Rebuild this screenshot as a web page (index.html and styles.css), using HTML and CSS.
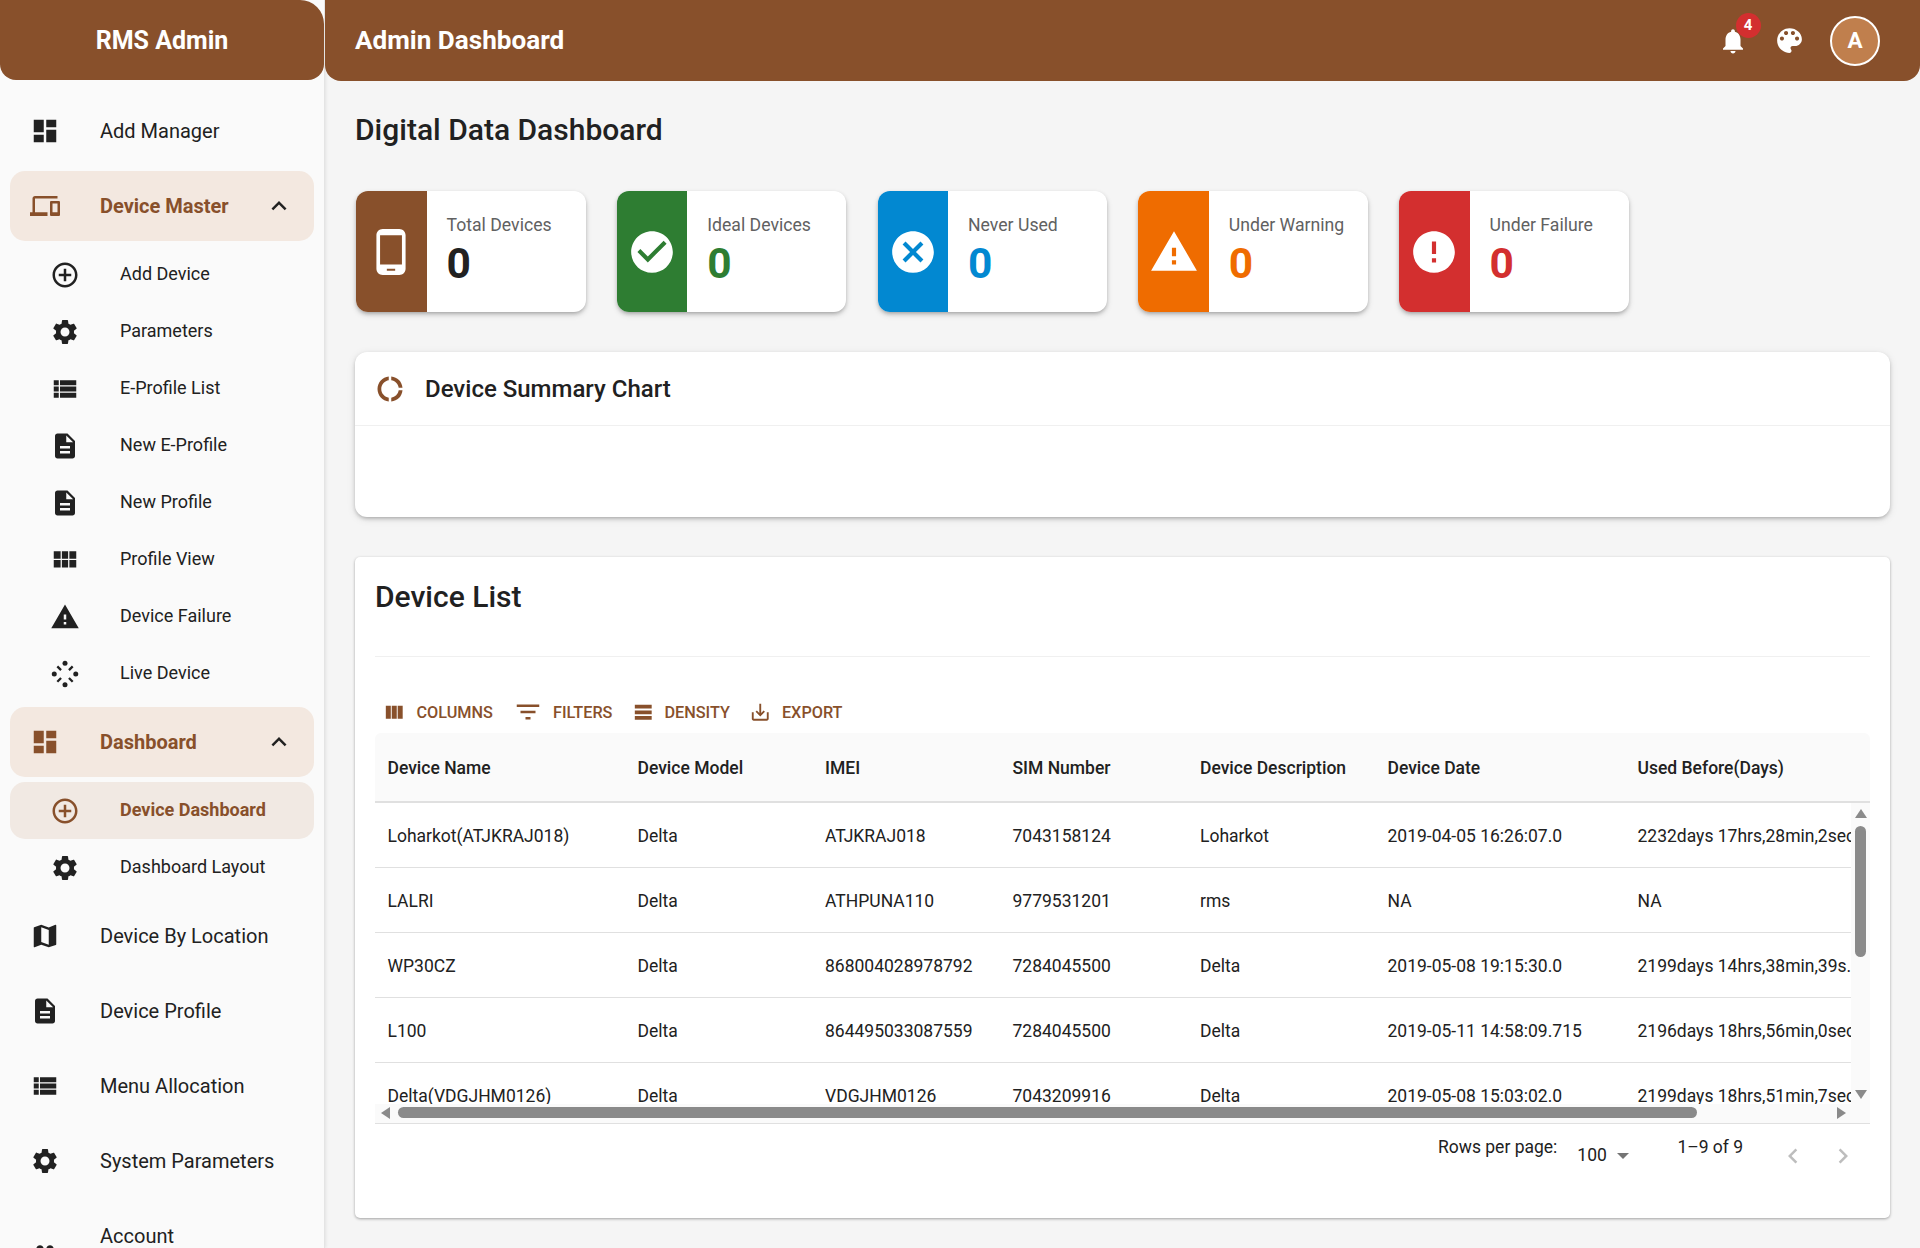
FILE: index.html
```html
<!DOCTYPE html>
<html lang="en">
<head>
  <meta charset="utf-8">
  <title>Admin Dashboard</title>
  <link rel="stylesheet" href="styles.css">
</head>
<body>

<svg class="sprite" xmlns="http://www.w3.org/2000/svg">
  <symbol id="i-dashboard" viewBox="0 0 24 24"><path d="M3 13h8V3H3v10zm0 8h8v-6H3v6zm10 0h8V11h-8v10zm0-18v6h8V3h-8z"/></symbol>
  <symbol id="i-devices" viewBox="0 0 24 24"><path d="M4 6h18V4H4c-1.1 0-2 .9-2 2v11H0v3h14v-3H4V6zm19 2h-6c-.55 0-1 .45-1 1v10c0 .55.45 1 1 1h6c.55 0 1-.45 1-1V9c0-.55-.45-1-1-1zm-1 9h-4v-7h4v7z"/></symbol>
  <symbol id="i-add" viewBox="0 0 24 24"><path d="M13 7h-2v4H7v2h4v4h2v-4h4v-2h-4V7zm-1-5C6.48 2 2 6.48 2 12s4.48 10 10 10 10-4.48 10-10S17.52 2 12 2zm0 18c-4.41 0-8-3.59-8-8s3.59-8 8-8 8 3.59 8 8-3.59 8-8 8z"/></symbol>
  <symbol id="i-settings" viewBox="0 0 24 24"><path d="M19.14 12.94c.04-.3.06-.61.06-.94 0-.32-.02-.64-.07-.94l2.03-1.58c.18-.14.23-.41.12-.61l-1.92-3.32c-.12-.22-.37-.29-.59-.22l-2.39.96c-.5-.38-1.03-.7-1.62-.94l-.36-2.54c-.04-.24-.24-.41-.48-.41h-3.84c-.24 0-.43.17-.47.41l-.36 2.54c-.59.24-1.13.57-1.62.94l-2.39-.96c-.22-.08-.47 0-.59.22L2.74 8.87c-.12.21-.08.47.12.61l2.03 1.58c-.05.3-.09.63-.09.94s.02.64.07.94l-2.03 1.58c-.18.14-.23.41-.12.61l1.92 3.32c.12.22.37.29.59.22l2.39-.96c.5.38 1.03.7 1.62.94l.36 2.54c.05.24.24.41.48.41h3.84c.24 0 .44-.17.47-.41l.36-2.54c.59-.24 1.13-.56 1.62-.94l2.39.96c.22.08.47 0 .59-.22l1.92-3.32c.12-.22.07-.47-.12-.61l-2.01-1.58zM12 15.6c-1.98 0-3.6-1.62-3.6-3.6s1.62-3.6 3.6-3.6 3.6 1.62 3.6 3.6-1.62 3.6-3.6 3.6z"/></symbol>
  <symbol id="i-list" viewBox="0 0 24 24"><path d="M3 14h4v-4H3v4zm0 5h4v-4H3v4zM3 9h4V5H3v4zm5 5h13v-4H8v4zm0 5h13v-4H8v4zM8 5v4h13V5H8z"/></symbol>
  <symbol id="i-doc" viewBox="0 0 24 24"><path d="M14 2H6c-1.1 0-1.99.9-1.99 2L4 20c0 1.1.89 2 1.99 2H18c1.1 0 2-.9 2-2V8l-6-6zm2 16H8v-2h8v2zm0-4H8v-2h8v2zm-3-5V3.5L18.5 9H13z"/></symbol>
  <symbol id="i-module" viewBox="0 0 24 24"><path d="M3 11h5.5V5H3v6zm0 7h5.5v-6H3v6zm6.5 0h5v-6h-5v6zm6 0H21v-6h-5.5v6zm-6-7h5V5h-5v6zm6-6v6H21V5h-5.5z"/></symbol>
  <symbol id="i-warning" viewBox="0 0 24 24"><path d="M1 21h22L12 2 1 21zm12-3h-2v-2h2v2zm0-4h-2v-4h2v4z"/></symbol>
  <symbol id="i-live" viewBox="0 0 24 24">
    <circle cx="12" cy="3.4" r="2"/><circle cx="20.6" cy="12" r="2"/><circle cx="12" cy="20.6" r="2"/><circle cx="3.4" cy="12" r="2"/>
    <path d="M6.5 5.2 9.5 8.2 8.2 9.5 5.2 6.5zM17.5 5.2 18.8 6.5 15.8 9.5 14.5 8.2zM8.2 14.5 9.5 15.8 6.5 18.8 5.2 17.5zM15.8 14.5 18.8 17.5 17.5 18.8 14.5 15.8z"/>
  </symbol>
  <symbol id="i-map" viewBox="0 0 24 24"><path d="M20.5 3l-.16.03L15 5.1 9 3 3.36 4.9c-.21.07-.36.25-.36.48V20.5c0 .28.22.5.5.5l.16-.03L9 18.9l6 2.1 5.64-1.9c.21-.07.36-.25.36-.48V3.5c0-.28-.22-.5-.5-.5zM15 19l-6-2.11V5l6 2.11V19z"/></symbol>
  <symbol id="i-people" viewBox="0 0 24 24"><path d="M16 11c1.66 0 2.99-1.34 2.99-3S17.66 5 16 5c-1.66 0-3 1.34-3 3s1.34 3 3 3zm-8 0c1.66 0 2.99-1.34 2.99-3S9.66 5 8 5C6.34 5 5 6.34 5 8s1.34 3 3 3zm0 2c-2.33 0-7 1.17-7 3.5V19h14v-2.5c0-2.33-4.67-3.5-7-3.5zm8 0c-.29 0-.62.02-.97.05 1.16.84 1.97 1.97 1.97 3.45V19h6v-2.5c0-2.33-4.67-3.5-7-3.5z"/></symbol>
  <symbol id="i-less" viewBox="0 0 24 24"><path d="M12 8l-6 6 1.41 1.41L12 10.83l4.59 4.58L18 14z"/></symbol>
  <symbol id="i-more" viewBox="0 0 24 24"><path d="M16.59 8.59L12 13.17 7.41 8.59 6 10l6 6 6-6z"/></symbol>
  <symbol id="i-bell" viewBox="0 0 24 24"><path d="M12 22c1.1 0 2-.9 2-2h-4c0 1.1.89 2 2 2zm6-6v-5c0-3.07-1.64-5.64-4.5-6.32V4c0-.83-.67-1.5-1.5-1.5s-1.5.67-1.5 1.5v.68C7.63 5.36 6 7.92 6 11v5l-2 2v1h16v-1l-2-2z"/></symbol>
  <symbol id="i-palette" viewBox="0 0 24 24"><path d="M12 3c-4.97 0-9 4.03-9 9s4.03 9 9 9c.83 0 1.5-.67 1.5-1.5 0-.39-.15-.74-.39-1.01-.23-.26-.38-.61-.38-.99 0-.83.67-1.5 1.5-1.5H16c2.76 0 5-2.24 5-5 0-4.42-4.03-8-9-8zm-5.5 9c-.83 0-1.5-.67-1.5-1.5S5.67 9 6.5 9 8 9.67 8 10.5 7.33 12 6.5 12zm3-4C8.67 8 8 7.33 8 6.5S8.67 5 9.5 5s1.5.67 1.5 1.5S10.33 8 9.5 8zm5 0c-.83 0-1.5-.67-1.5-1.5S13.67 5 14.5 5s1.5.67 1.5 1.5S15.33 8 14.5 8zm3 4c-.83 0-1.5-.67-1.5-1.5S16.67 9 17.5 9s1.5.67 1.5 1.5-.67 1.5-1.5 1.5z"/></symbol>
  <symbol id="i-phone" viewBox="0 0 24 24"><path d="M16 1H8C6.34 1 5 2.34 5 4v16c0 1.66 1.34 3 3 3h8c1.66 0 3-1.34 3-3V4c0-1.66-1.34-3-3-3zm-2 20h-4v-1h4v1zm3.25-3H6.75V4h10.5v14z"/></symbol>
  <symbol id="i-check" viewBox="0 0 24 24"><path d="M12 2C6.48 2 2 6.48 2 12s4.48 10 10 10 10-4.48 10-10S17.52 2 12 2zm-2 15l-5-5 1.41-1.41L10 14.17l7.59-7.59L19 8l-9 9z"/></symbol>
  <symbol id="i-cancel" viewBox="0 0 24 24"><path d="M12 2C6.47 2 2 6.47 2 12s4.47 10 10 10 10-4.47 10-10S17.53 2 12 2zm5 13.59L15.59 17 12 13.41 8.41 17 7 15.59 10.59 12 7 8.41 8.41 7 12 10.59 15.59 7 17 8.41 13.41 12 17 15.59z"/></symbol>
  <symbol id="i-error" viewBox="0 0 24 24"><path d="M12 2C6.48 2 2 6.48 2 12s4.48 10 10 10 10-4.48 10-10S17.52 2 12 2zm1 15h-2v-2h2v2zm0-4h-2V7h2v6z"/></symbol>
  <symbol id="i-donut" viewBox="0 0 24 24"><path d="M11 5.08V2c-5 .5-9 4.81-9 10s4 9.5 9 10v-3.08c-3-.48-6-3.19-6-6.92s3-6.44 6-6.92zM18.97 11H22c-.47-5-4-8.53-9-9v3.08C16 5.51 18.54 8 18.97 11zM13 18.92V22c5-.47 8.53-4 9-9h-3.03c-.43 3-2.97 5.49-5.97 5.92z"/></symbol>
  <symbol id="i-columns" viewBox="0 0 24 24"><path d="M14.67 5v14H9.33V5h5.33zm1 14H21V5h-5.33v14zm-7.34 0V5H3v14h5.33z"/></symbol>
  <symbol id="i-filter" viewBox="0 0 24 24"><path d="M10 18h4v-2h-4v2zM3 6v2h18V6H3zm3 7h12v-2H6v2z"/></symbol>
  <symbol id="i-density" viewBox="0 0 24 24"><path d="M21 8H3V4h18v4zm0 2H3v4h18v-4zm0 6H3v4h18v-4z"/></symbol>
  <symbol id="i-export" viewBox="0 0 24 24"><path d="M19 12v7H5v-7H3v7c0 1.1.9 2 2 2h14c1.1 0 2-.9 2-2v-7h-2zm-6 .67l2.59-2.58L17 11.5l-5 5-5-5 1.41-1.41L11 12.67V3h2z"/></symbol>
  <symbol id="i-prev" viewBox="0 0 24 24"><path d="M15.41 7.41L14 6l-6 6 6 6 1.41-1.41L10.83 12z"/></symbol>
  <symbol id="i-next" viewBox="0 0 24 24"><path d="M10 6L8.59 7.41 13.17 12l-4.58 4.59L10 18l6-6z"/></symbol>
</svg>

<div class="app">

  <aside class="sidebar">
    <div class="brand">RMS Admin</div>
    <ul class="menu">
      <li class="item"><svg class="icon"><use href="#i-dashboard"/></svg><span class="label">Add Manager</span></li>

      <li class="item open"><svg class="icon"><use href="#i-devices"/></svg><span class="label">Device Master</span><svg class="chevron"><use href="#i-less"/></svg></li>
      <li class="sub"><svg class="icon"><use href="#i-add"/></svg><span>Add Device</span></li>
      <li class="sub"><svg class="icon"><use href="#i-settings"/></svg><span>Parameters</span></li>
      <li class="sub"><svg class="icon"><use href="#i-list"/></svg><span>E-Profile List</span></li>
      <li class="sub"><svg class="icon"><use href="#i-doc"/></svg><span>New E-Profile</span></li>
      <li class="sub"><svg class="icon"><use href="#i-doc"/></svg><span>New Profile</span></li>
      <li class="sub"><svg class="icon"><use href="#i-module"/></svg><span>Profile View</span></li>
      <li class="sub"><svg class="icon"><use href="#i-warning"/></svg><span>Device Failure</span></li>
      <li class="sub last"><svg class="icon"><use href="#i-live"/></svg><span>Live Device</span></li>

      <li class="item open"><svg class="icon"><use href="#i-dashboard"/></svg><span class="label">Dashboard</span><svg class="chevron"><use href="#i-less"/></svg></li>
      <li class="sub active"><svg class="icon"><use href="#i-add"/></svg><span>Device Dashboard</span></li>
      <li class="sub last"><svg class="icon"><use href="#i-settings"/></svg><span>Dashboard Layout</span></li>

      <li class="item"><svg class="icon"><use href="#i-map"/></svg><span class="label">Device By Location</span></li>
      <li class="item"><svg class="icon"><use href="#i-doc"/></svg><span class="label">Device Profile</span></li>
      <li class="item"><svg class="icon"><use href="#i-list"/></svg><span class="label">Menu Allocation</span></li>
      <li class="item"><svg class="icon"><use href="#i-settings"/></svg><span class="label">System Parameters</span></li>
      <li class="item tall"><svg class="icon"><use href="#i-people"/></svg><span class="label wrap">Account Management</span><svg class="chevron"><use href="#i-more"/></svg></li>
    </ul>
  </aside>

  <div class="main">
    <header class="topbar">
      <h1>Admin Dashboard</h1>
      <div class="top-actions">
        <span class="bell"><svg class="icon"><use href="#i-bell"/></svg><span class="badge">4</span></span>
        <svg class="palette"><use href="#i-palette"/></svg>
        <span class="avatar">A</span>
      </div>
    </header>

    <main class="content">
      <h2 class="page-title">Digital Data Dashboard</h2>

      <div class="stats">
        <div class="stat brown">
          <div class="stat-icon"><svg><use href="#i-phone"/></svg></div>
          <div class="stat-text"><p>Total Devices</p><b>0</b></div>
        </div>
        <div class="stat green">
          <div class="stat-icon"><svg><use href="#i-check"/></svg></div>
          <div class="stat-text"><p>Ideal Devices</p><b>0</b></div>
        </div>
        <div class="stat blue">
          <div class="stat-icon"><svg><use href="#i-cancel"/></svg></div>
          <div class="stat-text"><p>Never Used</p><b>0</b></div>
        </div>
        <div class="stat orange">
          <div class="stat-icon"><svg><use href="#i-warning"/></svg></div>
          <div class="stat-text"><p>Under Warning</p><b>0</b></div>
        </div>
        <div class="stat red">
          <div class="stat-icon"><svg><use href="#i-error"/></svg></div>
          <div class="stat-text"><p>Under Failure</p><b>0</b></div>
        </div>
      </div>

      <section class="chart-card">
        <div class="chart-head">
          <svg class="icon"><use href="#i-donut"/></svg>
          <h3>Device Summary Chart</h3>
        </div>
      </section>

      <section class="list-card">
        <h2 class="list-title">Device List</h2>

        <div class="toolbar">
          <span class="tool t-columns"><svg><use href="#i-columns"/></svg>Columns</span>
          <span class="tool t-filters"><svg><use href="#i-filter"/></svg>Filters</span>
          <span class="tool t-density"><svg><use href="#i-density"/></svg>Density</span>
          <span class="tool t-export"><svg><use href="#i-export"/></svg>Export</span>
        </div>

        <div class="row head">
          <span>Device Name</span><span>Device Model</span><span>IMEI</span><span>SIM Number</span><span>Device Description</span><span>Device Date</span><span>Used Before(Days)</span>
        </div>

        <div class="grid-body">
          <div class="rows">
            <div class="row">
              <span>Loharkot(ATJKRAJ018)</span><span>Delta</span><span>ATJKRAJ018</span><span>7043158124</span><span>Loharkot</span><span>2019-04-05 16:26:07.0</span><span>2232days 17hrs,28min,2sec</span>
            </div>
            <div class="row">
              <span>LALRI</span><span>Delta</span><span>ATHPUNA110</span><span>9779531201</span><span>rms</span><span>NA</span><span>NA</span>
            </div>
            <div class="row">
              <span>WP30CZ</span><span>Delta</span><span>868004028978792</span><span>7284045500</span><span>Delta</span><span>2019-05-08 19:15:30.0</span><span>2199days 14hrs,38min,39s...</span>
            </div>
            <div class="row">
              <span>L100</span><span>Delta</span><span>864495033087559</span><span>7284045500</span><span>Delta</span><span>2019-05-11 14:58:09.715</span><span>2196days 18hrs,56min,0sec</span>
            </div>
            <div class="row">
              <span>Delta(VDGJHM0126)</span><span>Delta</span><span>VDGJHM0126</span><span>7043209916</span><span>Delta</span><span>2019-05-08 15:03:02.0</span><span>2199days 18hrs,51min,7sec</span>
            </div>
          </div>
          <div class="vbar">
            <i class="arrow up"></i>
            <i class="vthumb"></i>
            <i class="arrow down"></i>
          </div>
        </div>

        <div class="hbar">
          <i class="arrow left"></i>
          <i class="hthumb"></i>
          <i class="arrow right"></i>
        </div>

        <div class="pager">
          <span class="rows-label">Rows per page:</span>
          <span class="rows-select">100<i class="caret"></i></span>
          <span class="range">1–9 of 9</span>
          <svg class="page-btn prev"><use href="#i-prev"/></svg>
          <svg class="page-btn next"><use href="#i-next"/></svg>
        </div>
      </section>
    </main>
  </div>

</div>

</body>
</html>
```

FILE: styles.css
```css
* {
  box-sizing: border-box;
}

html, body {
  margin: 0;
  height: 1248px;
  overflow: hidden;
}

body {
  font-family: Roboto, "Liberation Sans", sans-serif;
  background: #f5f5f5;
  color: #212121;
}

.sprite {
  display: none;
}

svg {
  fill: currentColor;
}

.icon {
  width: 30px;
  height: 30px;
  flex: none;
}

.app {
  display: flex;
  height: 1248px;
}

/* sidebar */
.sidebar {
  width: 325px;
  flex: none;
  background: #fafafa;
  border-right: 1px solid #e4e4e4;
  box-shadow: 1px 0 3px rgba(0, 0, 0, 0.08);
  overflow: hidden;
}

.brand {
  width: 324px;
  height: 80px;
  padding-top: 1px;
  background: #88502b;
  color: white;
  font-size: 25px;
  font-weight: 700;
  line-height: 80px;
  text-align: center;
  border-radius: 0 24px 16px 16px;
}

.menu {
  list-style: none;
  margin: 0;
  padding: 16px 0 0;
}

.item {
  display: flex;
  align-items: center;
  margin: 0 10px 5px;
  padding: 20px;
  border-radius: 15px;
  font-size: 20px;
  line-height: 30px;
}

.item .icon {
  margin-right: 40px;
}

.item .label {
  flex: 1;
}

.item.tall {
  padding: 17px 20px;
}

.item .wrap {
  width: 150px;
  flex: none;
  line-height: 36px;
}

.chevron {
  width: 30px;
  height: 30px;
  flex: none;
  margin-left: auto;
}

.item.open {
  background: #f3e8e0;
}

.item.open .label {
  color: #88502b;
  font-weight: 700;
}

.item.open .icon {
  color: #88502b;
}

.sub {
  display: flex;
  align-items: center;
  height: 57px;
  margin: 0 10px;
  padding-left: 40px;
  border-radius: 15px;
  font-size: 18px;
}

.sub .icon {
  margin-right: 40px;
}

.sub span {
  margin-top: -2px;
}

.sub.last {
  margin-bottom: 5px;
}

.sub.active {
  background: #f1e9e3;
  color: #88502b;
  font-weight: 700;
}

/* top bar */
.main {
  flex: 1;
  min-width: 0;
}

.topbar {
  display: flex;
  align-items: center;
  justify-content: space-between;
  height: 81px;
  padding: 0 40px 0 30px;
  background: #88502b;
  color: white;
  border-radius: 0 0 16px 16px;
}

.topbar h1 {
  margin: -2px 0 0;
  font-size: 26.1px;
  font-weight: 700;
}

.top-actions {
  display: flex;
  align-items: center;
}

.bell {
  position: relative;
  display: flex;
  width: 30px;
  margin-right: 24.5px;
}

.badge {
  position: absolute;
  top: -13px;
  left: 17.5px;
  width: 25px;
  height: 25px;
  border-radius: 50%;
  background: #d32f2f;
  font-size: 15px;
  font-weight: 700;
  line-height: 25px;
  text-align: center;
}

.palette {
  width: 33px;
  height: 33px;
  flex: none;
  margin-right: 24.5px;
}

.avatar {
  width: 50px;
  height: 50px;
  border: 2.5px solid white;
  border-radius: 50%;
  background: #c07f4d;
  font-size: 22.5px;
  font-weight: 700;
  line-height: 45px;
  text-align: center;
}

/* content */
.content {
  padding: 31px 30px 0;
}

.page-title {
  margin: 0 0 43px;
  font-size: 30px;
  font-weight: 500;
  line-height: 36px;
}

.stats {
  display: flex;
  gap: 31.25px;
  margin: 0 0 40px 1px;
}

.stat {
  display: flex;
  width: 229.5px;
  height: 121px;
  background: white;
  border-radius: 12px;
  overflow: hidden;
  box-shadow: 0 2px 4px -1px rgba(0, 0, 0, 0.3), 0 3px 6px rgba(0, 0, 0, 0.12);
}

.stat-icon {
  display: flex;
  align-items: center;
  justify-content: center;
  width: 70.5px;
  color: white;
}

.stat-icon svg {
  width: 50px;
  height: 50px;
}

.stat-text {
  padding: 24px 0 0 20px;
}

.stat-text p {
  margin: 0;
  color: #616161;
  font-size: 17.65px;
  line-height: 21px;
}

.stat-text b {
  display: block;
  margin-top: 2.5px;
  font-size: 42.5px;
  font-weight: 700;
  line-height: 50px;
}

.brown .stat-icon { background: #88502b; }
.green .stat-icon { background: #2e7d32; }
.blue .stat-icon { background: #0288d1; }
.orange .stat-icon { background: #ef6c00; }
.red .stat-icon { background: #d32f2f; }

.green b { color: #2e7d32; }
.blue b { color: #0288d1; }
.orange b { color: #ef6c00; }
.red b { color: #d32f2f; }

.chart-card {
  height: 165px;
  margin-bottom: 40px;
  background: white;
  border-radius: 12px;
  box-shadow: 0 2px 4px -1px rgba(0, 0, 0, 0.3), 0 2px 8px rgba(0, 0, 0, 0.1);
}

.chart-head {
  display: flex;
  align-items: center;
  height: 74px;
  padding: 1px 0 0 20px;
  border-bottom: 1px solid #f0f0f0;
}

.chart-head .icon {
  margin-right: 20px;
  color: #88502b;
}

.chart-head h3 {
  margin: 0;
  font-size: 24px;
  font-weight: 500;
}

.list-card {
  height: 661px;
  padding: 21px 20px 0;
  background: white;
  border-radius: 5px;
  box-shadow: 0 1px 3px rgba(0, 0, 0, 0.35);
}

.list-title {
  height: 79px;
  margin: 0;
  padding-top: 1px;
  border-bottom: 1px solid #f0f0f0;
  font-size: 30px;
  font-weight: 500;
  line-height: 36px;
}

.toolbar {
  display: flex;
  align-items: center;
  height: 76px;
  padding-top: 34px;
  color: #88502b;
  font-size: 16.25px;
  font-weight: 500;
  text-transform: uppercase;
}

.tool {
  display: flex;
  align-items: center;
}

.tool svg {
  width: 22.5px;
  height: 22.5px;
  flex: none;
}

.t-columns { margin-left: 8px; }
.t-columns svg { margin-right: 11px; }
.t-filters { margin-left: 20px; }
.t-filters svg { width: 30px; height: 30px; margin-right: 10px; }
.t-density { margin-left: 19.5px; }
.t-density svg { margin-right: 10px; }
.t-export { margin-left: 19.5px; }
.t-export svg { margin-right: 10px; }

.row {
  display: grid;
  grid-template-columns: 250px 187.5px 187.5px 187.5px 187.5px 250px 250px 159px;
  align-items: center;
  height: 65px;
  padding-top: 2px;
  border-bottom: 1.25px solid #e0e0e0;
  font-size: 17.5px;
  white-space: nowrap;
}

.row span {
  padding-left: 12.5px;
  overflow: hidden;
}

.row.head {
  height: 70px;
  padding-top: 1px;
  background: #fafafa;
  border-bottom-width: 2px;
  border-radius: 6px 6px 0 0;
  font-weight: 500;
}

.grid-body {
  display: flex;
  height: 301px;
}

.rows {
  flex: 1;
  min-width: 0;
  overflow: hidden;
}

.vbar {
  display: flex;
  flex-direction: column;
  align-items: center;
  width: 19px;
  flex: none;
  padding: 6px 0 5px;
  background: #fafafa;
}

.vthumb {
  width: 11px;
  height: 131px;
  margin-top: 8px;
  border-radius: 6px;
  background: #8a8a8a;
}

.arrow {
  display: block;
  width: 0;
  height: 0;
  border-style: solid;
  border-color: transparent;
}

.arrow.up {
  border-width: 0 6.5px 9px;
  border-bottom-color: #8a8a8a;
}

.arrow.down {
  margin-top: auto;
  border-width: 9px 6.5px 0;
  border-top-color: #8a8a8a;
}

.hbar {
  display: flex;
  align-items: center;
  height: 20px;
  padding: 0 24px 1.5px 6px;
  border-bottom: 1.5px solid #e0e0e0;
  background: #fafafa;
}

.hthumb {
  width: 1299px;
  height: 11px;
  margin-left: 8px;
  border-radius: 6px;
  background: #8a8a8a;
}

.arrow.left {
  border-width: 6.5px 9px 6.5px 0;
  border-right-color: #8a8a8a;
}

.arrow.right {
  margin-left: auto;
  border-width: 6.5px 0 6.5px 9px;
  border-left-color: #8a8a8a;
}

.pager {
  display: flex;
  align-items: flex-start;
  height: 60px;
  padding-left: 1063px;
  font-size: 17.5px;
}

.rows-label {
  margin-top: 13px;
  line-height: 21px;
}

.rows-select {
  display: flex;
  align-items: center;
  margin: 21px 0 0 20px;
  line-height: 21px;
}

.caret {
  width: 0;
  height: 0;
  margin-left: 10px;
  border-style: solid;
  border-width: 6px 6px 0;
  border-color: #757575 transparent transparent;
}

.range {
  margin: 13px 0 0 48.5px;
  line-height: 21px;
}

.page-btn {
  width: 30px;
  height: 30px;
  margin-top: 17px;
  color: #bdbdbd;
}

.prev {
  margin-left: 34.5px;
}

.next {
  margin-left: 20px;
}
```
